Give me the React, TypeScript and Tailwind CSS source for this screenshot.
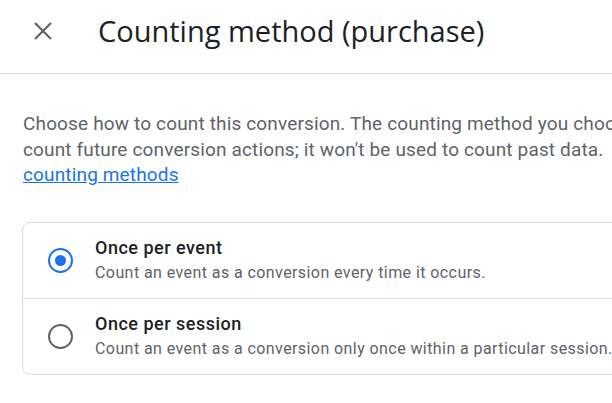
const options = [
  {
    label: 'Once per event',
    description: 'Count an event as a conversion every time it occurs.',
    checked: true,
  },
  {
    label: 'Once per session',
    description: 'Count an event as a conversion only once within a particular session.',
    checked: false,
  },
]

function Radio({ checked }: { checked: boolean }) {
  if (checked) {
    return (
      <span className="flex h-[25px] w-[25px] shrink-0 items-center justify-center rounded-full border-[2.5px] border-[#1a73e8]">
        <span className="h-[11px] w-[11px] rounded-full bg-[#1a73e8]" />
      </span>
    )
  }
  return <span className="h-[25px] w-[25px] shrink-0 rounded-full border-2 border-[#5f6368]" />
}

export default function App() {
  return (
    <div className="h-[403px] w-[612px] overflow-hidden bg-white font-['Roboto',sans-serif]">
      {/* Header */}
      <div className="flex h-[74px] items-center border-b border-[#dadce0] pb-[12px]">
        <button className="ml-[33px] flex h-5 w-5 items-center justify-center text-[#5f6368]">
          <svg viewBox="0 0 20 20" className="h-5 w-5" fill="none" stroke="currentColor" strokeWidth={2.2}>
            <path d="M2 2 L18 18 M18 2 L2 18" />
          </svg>
        </button>
        <h1 className="ml-[45px] whitespace-nowrap font-['Open_Sans',sans-serif] text-[29px] leading-[40px] text-[#202124]">
          Counting method (purchase)
        </h1>
      </div>

      {/* Body */}
      <div className="w-[800px] px-[23px] pt-[37px]">
        <p className="text-[19px] leading-[25.5px] tracking-[0.15px] text-[#5f6368]">
          <span className="block whitespace-nowrap">
            Choose how to count this conversion. The counting method you choose will be used to
          </span>
          <span className="block whitespace-nowrap">
            count future conversion actions; it won't be used to count past data.&nbsp; Learn more about
          </span>
          <a href="#" className="text-[#1a73e8] underline">
            counting methods
          </a>
        </p>

        <div className="-ml-px mt-[34px] rounded-lg border border-[#dadce0]">
          {options.map((o, i) => (
            <div
              key={o.label}
              className={`flex h-[75px] items-center pl-[25px] ${i > 0 ? 'h-[76px] border-t border-[#dadce0]' : ''}`}
            >
              <Radio checked={o.checked} />
              <div className="ml-[22px] whitespace-nowrap">
                <div className="text-[18px] font-medium leading-[24px] tracking-[0.5px] text-[#202124]">{o.label}</div>
                <div className="mt-[1.5px] text-[16px] leading-[22px] tracking-[0.42px] text-[#5f6368]">
                  {o.description}
                </div>
              </div>
            </div>
          ))}
        </div>
      </div>
    </div>
  )
}
